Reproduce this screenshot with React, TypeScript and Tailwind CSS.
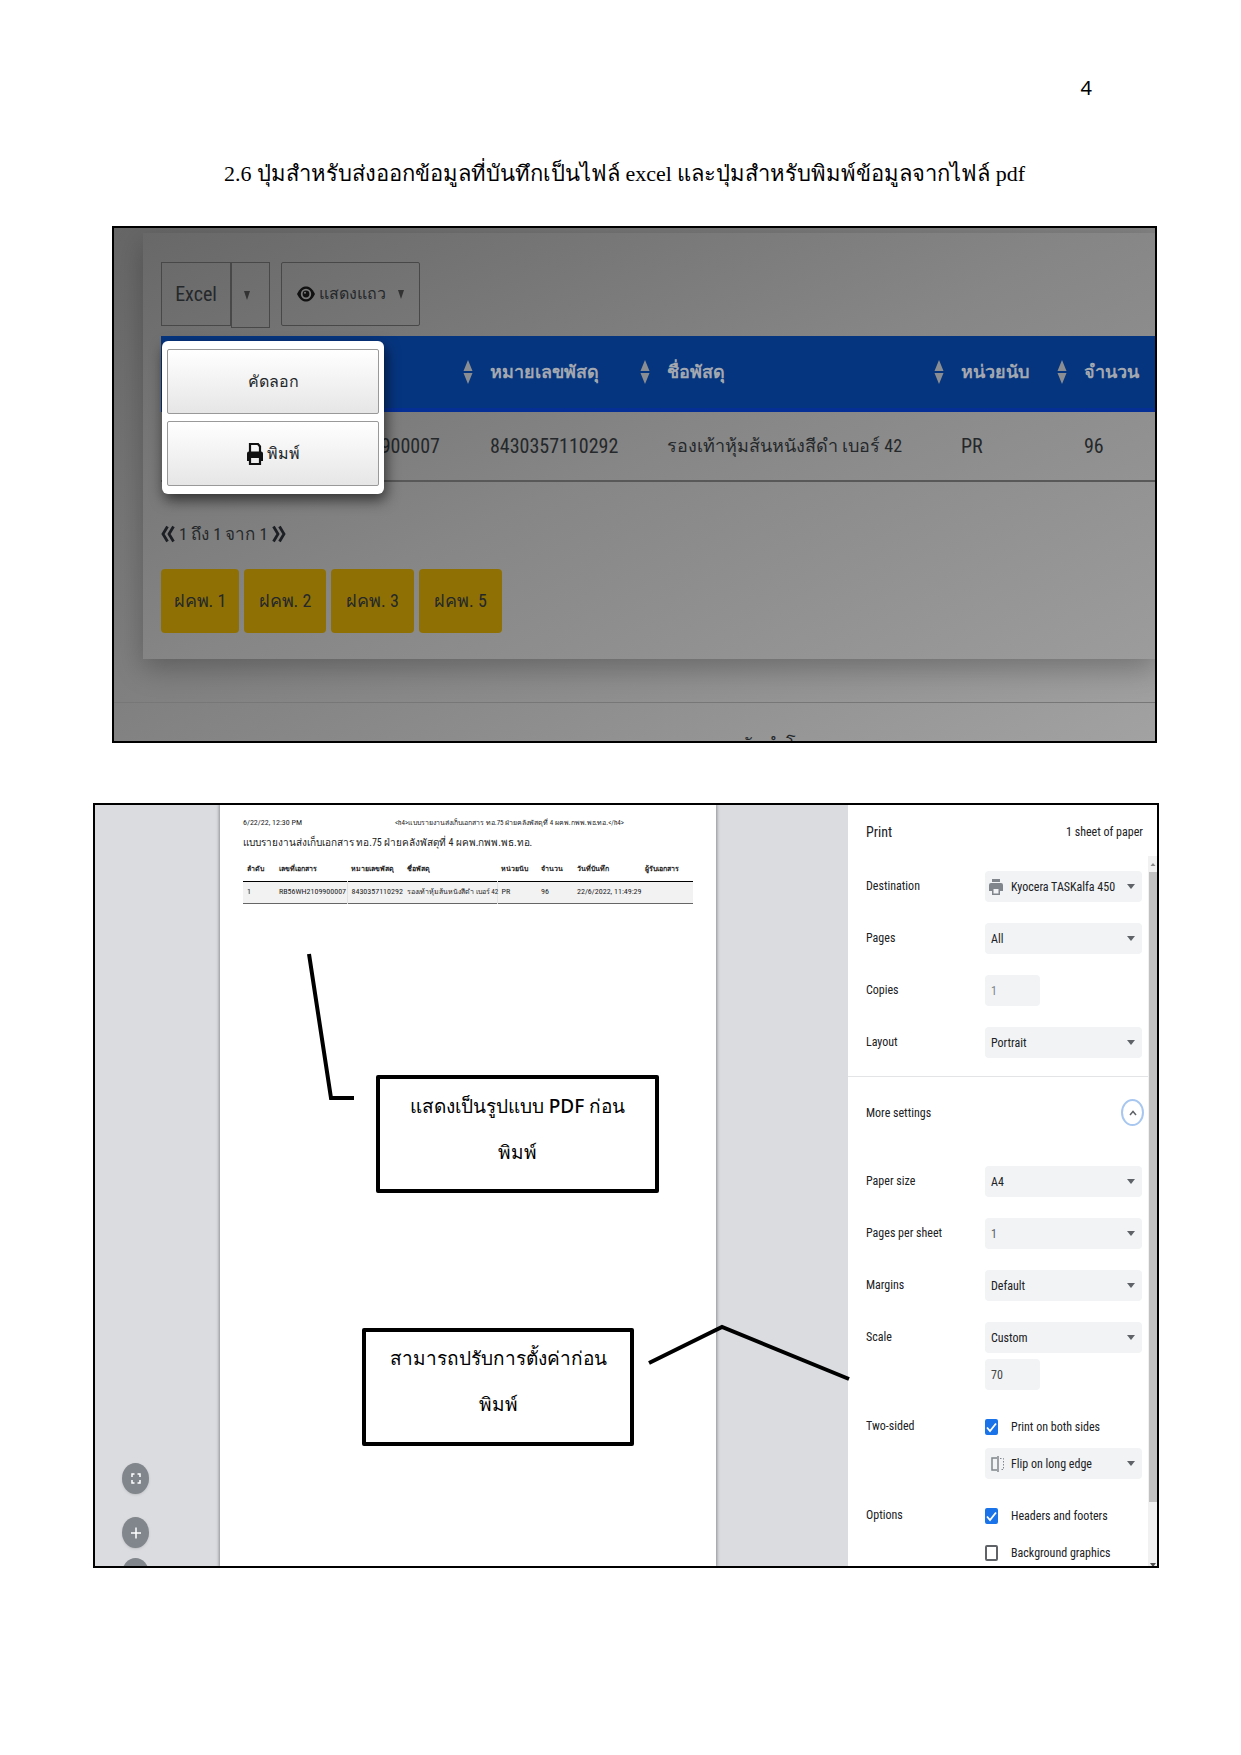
import React from 'react';

const Caret = () => (
  <svg aria-hidden="true" viewBox="0 0 8 5" className="pointer-events-none absolute top-[13px] right-[7px] h-[5px] w-2 fill-[#5f6368]">
    <path d="M0 0h8L4 5z" />
  </svg>
);

function Row({ label, htmlFor, children }: { label: string; htmlFor?: string; children?: React.ReactNode }) {
  return (
    <div className="flex items-start">
      <label htmlFor={htmlFor} className="w-[119px] shrink-0 leading-[31px]">{label}</label>
      <div className="min-w-0 flex-1">{children}</div>
    </div>
  );
}

function Select({ id, value, icon, muted, label }: { id: string; value: string; icon?: React.ReactNode; muted?: boolean; label?: string }) {
  return (
    <div className="relative">
      {icon}
      <select
        id={id}
        aria-label={label}
        defaultValue={value}
        className={'block h-[31px] w-full appearance-none rounded-sm bg-[#f1f3f4] pr-4 ' + (icon ? 'pl-[26px] ' : 'pl-1.5 ') + (muted ? 'text-[#5f6368]' : '')}
      >
        <option>{value}</option>
      </select>
      <Caret />
    </div>
  );
}

function Check({ id, label, checked }: { id: string; label: string; checked?: boolean }) {
  return (
    <div className="flex h-[31px] items-center">
      <span className="relative h-4 w-[13px] shrink-0">
        <input
          id={id}
          type="checkbox"
          defaultChecked={checked}
          className="peer block h-4 w-[13px] appearance-none rounded-xs border-2 border-[#5f6368] bg-white checked:border-[#1a73e8] checked:bg-[#1a73e8]"
        />
        <svg aria-hidden="true" viewBox="0 0 13 16" className="pointer-events-none absolute inset-0 hidden h-4 w-[13px] peer-checked:block">
          <path d="M2 8.5 5 12 11 4.5" fill="none" stroke="#fff" strokeWidth="1.8" />
        </svg>
      </span>
      <label htmlFor={id} className="ml-[13px] whitespace-nowrap">{label}</label>
    </div>
  );
}

const Sort = () => (
  <svg aria-hidden="true" viewBox="0 0 10 24" className="h-6 w-2.5 shrink-0 fill-[#8a8d92]">
    <path d="M5 0 9.500 11h-9zM5 24 9.500 13h-9z" />
  </svg>
);

function SortHead({ children, className }: { children?: React.ReactNode; className?: string }) {
  return (
    <th className={'p-0 text-left font-bold ' + (className ?? '')}>
      <div className="flex items-center justify-between pr-[5px] pl-3">
        <span className="whitespace-nowrap">{children}</span>
        <Sort />
      </div>
    </th>
  );
}

const Chevrons = ({ flip }: { flip?: boolean }) => (
  <svg aria-hidden="true" viewBox="0 0 14 18" className={'h-[18px] w-3.5 ' + (flip ? 'rotate-180' : '')}>
    <path d="M6.5 1.5 2 9l4.500 7.500M12.500 1.500 8 9l4.500 7.500" fill="none" stroke="#1c1f23" strokeWidth="2.800" />
  </svg>
);

const units = [
  { name: 'ฝคพ. 1', width: 'w-[78px]' },
  { name: 'ฝคพ. 2', width: 'w-[82px]' },
  { name: 'ฝคพ. 3', width: 'w-[83px]' },
  { name: 'ฝคพ. 5', width: 'w-[83px]' },
];

function ExportFigure() {
  return (
    <section className="relative h-[517px] overflow-hidden border-2 border-black bg-linear-to-br from-[#666666] via-[#828282] to-[#a2a2a2] font-['Roboto_Condensed','Roboto',sans-serif] text-lg text-[#25282b]">
      <div className="mt-[5px] ml-[29px] h-[426px] bg-linear-[155deg] from-[#686868] via-[#868686] to-[#9c9c9c] pt-[29px] pl-[18px] shadow-[0_10px_26px_rgba(0,0,0,0.25)]">
        <div className="flex">
          <button className="h-16 w-[70px] border border-[#484848] text-xl">Excel</button>
          <button aria-label="ตัวเลือกเพิ่มเติม" className="flex h-[66px] w-[39px] items-center justify-center border border-[#484848] pr-2">
            <svg viewBox="0 0 6 9" className="h-[9px] w-1.5 fill-[#333]"><path d="M0 0h6L3 9z" /></svg>
          </button>
          <button className="ml-[11px] flex h-16 w-[139px] items-center justify-center gap-1 rounded-xs border border-[#484848]">
            <svg viewBox="0 0 18 18" className="size-[18px]">
              <path d="M0 9C3 3 6 1.500 9 1.500s6 1.500 9 7.500c-3 6-6 7.500-9 7.500S3 15 0 9z" fill="#111" />
              <circle cx="9" cy="9" r="5.200" fill="#7a7a7a" />
              <circle cx="9" cy="9" r="3.400" fill="#111" />
              <circle cx="8" cy="7.800" r="1" fill="#7a7a7a" />
            </svg>
            <span className="text-base">แสดงแถว</span>
            <svg viewBox="0 0 6 9" className="ml-2 h-[9px] w-1.5 fill-[#333]"><path d="M0 0h6L3 9z" /></svg>
          </button>
        </div>
        <table className="mt-2 w-full table-fixed border-collapse">
          <thead>
            <tr className="h-[74px] border-b-4 border-[#062f96] bg-[#06357f] text-[#a3a8b0]">
              <SortHead className="w-[317px]" />
              <SortHead className="w-[177px]">หมายเลขพัสดุ</SortHead>
              <SortHead className="w-[294px]">ชื่อพัสดุ</SortHead>
              <SortHead className="w-[123px]">หน่วยนับ</SortHead>
              <th className="p-0 pl-3 text-left font-bold">จำนวน</th>
            </tr>
          </thead>
          <tbody>
            <tr className="h-[71px] border-b-2 border-[#585858] text-xl">
              <td className="pr-[38px] text-right">900007</td>
              <td className="pl-3">8430357110292</td>
              <td className="pl-3 text-lg whitespace-nowrap">รองเท้าหุ้มส้นหนังสีดำ เบอร์ 42</td>
              <td className="pl-3">PR</td>
              <td className="pl-3">96</td>
            </tr>
          </tbody>
        </table>
        <nav className="mt-9 flex h-8 items-center gap-1 text-[17px]">
          <button aria-label="ก่อนหน้า"><Chevrons /></button>
          <span>1 ถึง 1 จาก 1</span>
          <button aria-label="ถัดไป"><Chevrons flip /></button>
        </nav>
        <div className="mt-[19px] flex gap-[5px]">
          {units.map((u) => (
            <button key={u.name} className={'h-16 rounded-sm bg-[#8f7004] ' + u.width}>{u.name}</button>
          ))}
        </div>
      </div>
      <hr className="mt-[43px] border-[#777]" />
      <p className="mt-7 ml-[627px] leading-7 whitespace-nowrap">จัดทำโดย</p>
      <div role="menu" className="absolute top-[113px] left-12 flex w-[222px] flex-col gap-[7px] rounded-md bg-white px-[5px] py-2 text-base shadow-[2px_6px_14px_rgba(0,0,0,0.6)]">
        <button role="menuitem" className="h-[65px] rounded-xs border border-[#999] bg-linear-to-b from-white to-[#e6e6e6]">คัดลอก</button>
        <button role="menuitem" className="flex h-[65px] items-center justify-center gap-1 rounded-xs border border-[#999] bg-linear-to-b from-white to-[#e6e6e6]">
          <svg aria-hidden="true" viewBox="0 0 16 24" className="h-6 w-4">
            <path d="M3 10V2h8l2 2.500V10M3 16v6h10v-6" fill="none" stroke="#111" strokeWidth="2.200" />
            <path d="M0 11.500Q0 9.500 2 9.500h12q2 0 2 2V19h-3v-3H3v3H0z" fill="#111" />
          </svg>
          พิมพ์
        </button>
      </div>
    </section>
  );
}

function PreviewPaper() {
  return (
    <article className="w-[496px] shrink-0 bg-white px-[23px] pt-3 font-['Roboto_Condensed','Roboto',sans-serif] text-[#222] shadow-[0_0_3px_1px_rgba(0,0,0,0.35)]">
      <div className="flex text-[7px] leading-3">
        <span className="w-[152px] text-[8px]">6/22/22, 12:30 PM</span>
        <span className="whitespace-nowrap">&lt;h4&gt;แบบรายงานส่งเก็บเอกสาร ทอ.75 ฝ่ายคลังพัสดุที่ 4 ผคพ.กพพ.พธ.ทอ.&lt;/h4&gt;</span>
      </div>
      <h4 className="mt-1 text-[10px] leading-5 whitespace-nowrap">แบบรายงานส่งเก็บเอกสาร ทอ.75 ฝ่ายคลังพัสดุที่ 4 ผคพ.กพพ.พธ.ทอ.</h4>
      <table className="mt-1 w-full table-fixed border-collapse text-left text-[7px] whitespace-nowrap">
        <thead>
          <tr className="h-6 border-b border-black">
            <th className="w-8 p-0 pl-1">ลำดับ</th>
            <th className="w-[72px] p-0 pl-1">เลขที่เอกสาร</th>
            <th className="w-14 p-0 pl-1">หมายเลขพัสดุ</th>
            <th className="w-[94px] p-0 pl-1">ชื่อพัสดุ</th>
            <th className="w-10 p-0 pl-1">หน่วยนับ</th>
            <th className="w-9 p-0 pl-1">จำนวน</th>
            <th className="w-[68px] p-0 pl-1">วันที่บันทึก</th>
            <th className="p-0 pl-1">ผู้รับเอกสาร</th>
          </tr>
        </thead>
        <tbody>
          <tr className="h-[22px] border-b border-[#666] bg-[#f2f2f2] text-[8px]">
            <td className="p-0 pl-1">1</td>
            <td className="border-r border-[#e2e2e2] p-0 pl-1">RB56WH2109900007</td>
            <td className="p-0 pl-1">8430357110292</td>
            <td className="border-r border-[#e2e2e2] p-0 pl-1 text-[7px]">รองเท้าหุ้มส้นหนังสีดำ เบอร์ 42</td>
            <td className="p-0 pl-1">PR</td>
            <td className="p-0 pl-1">96</td>
            <td className="p-0 pl-1">22/6/2022, 11:49:29</td>
            <td />
          </tr>
        </tbody>
      </table>
    </article>
  );
}

function PrintFigure() {
  return (
    <section className="relative flex h-[765px] overflow-hidden border-2 border-black bg-[#dadce0]">
      <div className="relative w-[125px] shrink-0">
        <div className="absolute top-[658px] left-[27px] flex flex-col">
          <button aria-label="Fit to page" className="flex h-[31px] w-[27px] items-center justify-center rounded-[50%] bg-[#80868b] shadow">
            <svg viewBox="0 0 10 11" className="h-[11px] w-2.5"><path d="M1 4V1h2.500M6.500 1H9v3M9 7v3H6.500M3.500 10H1V7" fill="none" stroke="#fff" strokeWidth="1.500" /></svg>
          </button>
          <button aria-label="Zoom in" className="mt-[23px] flex h-[31px] w-[27px] items-center justify-center rounded-[50%] bg-[#80868b] shadow">
            <svg viewBox="0 0 10 12" className="h-3 w-2.5"><path d="M5 .5v11M0 6h10" stroke="#fff" strokeWidth="1.500" /></svg>
          </button>
          <button aria-label="Zoom out" className="mt-2.5 h-[31px] w-[27px] rounded-[50%] bg-[#80868b]" />
        </div>
      </div>
      <PreviewPaper />
      <div className="min-w-0 flex-1" />
      <form className="w-[309px] shrink-0 bg-white font-['Roboto_Condensed','Roboto',sans-serif] text-xs text-[#202124]">
        <div className="flex h-[51px] items-center justify-between pt-0.5 pr-3.5 pl-[18px]">
          <h2 className="text-sm">Print</h2>
          <span>1 sheet of paper</span>
        </div>
        <div className="flex">
          <div className="min-w-0 flex-1">
            <div className="flex flex-col gap-[21px] border-b border-[#e3e4e6] pt-[15px] pr-1.5 pb-[18px] pl-[18px]">
              <Row label="Destination" htmlFor="dest">
                <Select id="dest" value="Kyocera TASKalfa 450" icon={
                  <svg aria-hidden="true" viewBox="0 0 14 16" className="absolute top-2 left-1 h-4 w-3.5 fill-[#80868b]">
                    <path d="M3 0h8v3H3zM2 4h10q2 0 2 2v6h-3v4H3v-4H0V6q0-2 2-2zm2.500 6v4.500h5V10z" fillRule="evenodd" />
                  </svg>
                } />
              </Row>
              <Row label="Pages" htmlFor="pages"><Select id="pages" value="All" /></Row>
              <Row label="Copies" htmlFor="copies"><input id="copies" defaultValue="1" className="block h-[31px] w-[55px] rounded-sm bg-[#f1f3f4] pl-1.5 text-[#80868b]" /></Row>
              <Row label="Layout" htmlFor="layout"><Select id="layout" value="Portrait" /></Row>
            </div>
            <div className="flex h-[71px] items-center justify-between pr-1 pl-[18px]">
              <span>More settings</span>
              <button type="button" aria-label="Collapse" className="flex h-[27px] w-[23px] items-center justify-center rounded-[50%] border-2 border-[#a8c7f0]">
                <svg viewBox="0 0 8 6" className="h-1.5 w-2"><path d="M1 5l3-3.500L7 5" fill="none" stroke="#5f6368" strokeWidth="1.500" /></svg>
              </button>
            </div>
            <div className="flex flex-col gap-[21px] pt-[18px] pr-1.5 pl-[18px]">
              <Row label="Paper size" htmlFor="size"><Select id="size" value="A4" /></Row>
              <Row label="Pages per sheet" htmlFor="pps"><Select id="pps" value="1" muted /></Row>
              <Row label="Margins" htmlFor="margins"><Select id="margins" value="Default" /></Row>
              <Row label="Scale" htmlFor="scale">
                <Select id="scale" value="Custom" />
                <input aria-label="Scale percent" defaultValue="70" className="mt-1.5 block h-[31px] w-[55px] rounded-sm bg-[#f1f3f4] pl-1.5 text-[#444]" />
              </Row>
              <Row label="Two-sided" htmlFor="both">
                <Check id="both" label="Print on both sides" checked />
                <div className="mt-1.5">
                  <Select id="flip" label="Flip" value="Flip on long edge" icon={
                    <svg aria-hidden="true" viewBox="0 0 14 16" className="absolute top-2 left-1.5 h-4 w-3.5 fill-none stroke-[#80868b]">
                      <path d="M6 2H1v12h5" strokeWidth="1.500" /><path d="M7 0v16" strokeWidth="1.500" /><path d="M9 2.500h3.500v11H9" strokeDasharray="1.500 1.500" />
                    </svg>
                  } />
                </div>
              </Row>
              <Row label="Options" htmlFor="hf">
                <Check id="hf" label="Headers and footers" checked />
                <div className="mt-1.5"><Check id="bg" label="Background graphics" /></div>
              </Row>
            </div>
          </div>
          <div aria-hidden="true" className="flex h-[712px] w-[9px] shrink-0 flex-col items-end bg-[#f1f1f1]">
            <svg viewBox="0 0 8 16" className="h-4 w-2 fill-[#8a8a8a]"><path d="M1.500 10h5L4 7z" /></svg>
            <div className="h-[630px] w-2 bg-[#c1c1c1]" />
            <svg viewBox="0 0 8 5" className="mt-auto h-[5px] w-2 fill-[#505050]"><path d="M1 0h6L4 4z" /></svg>
          </div>
        </div>
      </form>
      <svg aria-hidden="true" className="pointer-events-none absolute top-0 left-0 h-[600px] w-[760px]" viewBox="0 0 760 600">
        <path d="M214 149 236 293h23M554 558l73-36 127 52" fill="none" stroke="#000" strokeWidth="4" />
      </svg>
      <Callout className="top-[270px] left-[281px] w-[283px]">แสดงเป็นรูปแบบ <span className="font-['Noto_Sans'] font-medium">PDF</span> ก่อน<br />พิมพ์</Callout>
      <Callout className="top-[523px] left-[267px] w-[272px]">สามารถปรับการตั้งค่าก่อน<br />พิมพ์</Callout>
    </section>
  );
}

function Callout({ className, children }: { className: string; children: React.ReactNode }) {
  return (
    <p className={"absolute h-[118px] rounded-xs border-4 border-black bg-white pt-1 text-center font-['Roboto',sans-serif] text-[19px] leading-[46px] whitespace-nowrap text-black " + className}>
      {children}
    </p>
  );
}

export default function App() {
  return (
    <main className="min-h-[1755px] bg-white pt-[76px] text-black">
      <p className="pr-[149px] text-right font-['Noto_Sans',sans-serif] text-xl leading-6">4</p>
      <h1 className="mt-[58px] pl-2 text-center font-['Liberation_Serif',serif] text-[22px] leading-8 whitespace-nowrap">
        2.6 ปุ่มสำหรับส่งออกข้อมูลที่บันทึกเป็นไฟล์ excel และปุ่มสำหรับพิมพ์ข้อมูลจากไฟล์ pdf
      </h1>
      <div className="mt-9 pr-[84px] pl-28"><ExportFigure /></div>
      <div className="mt-[60px] pr-[82px] pl-[93px]"><PrintFigure /></div>
    </main>
  );
}
